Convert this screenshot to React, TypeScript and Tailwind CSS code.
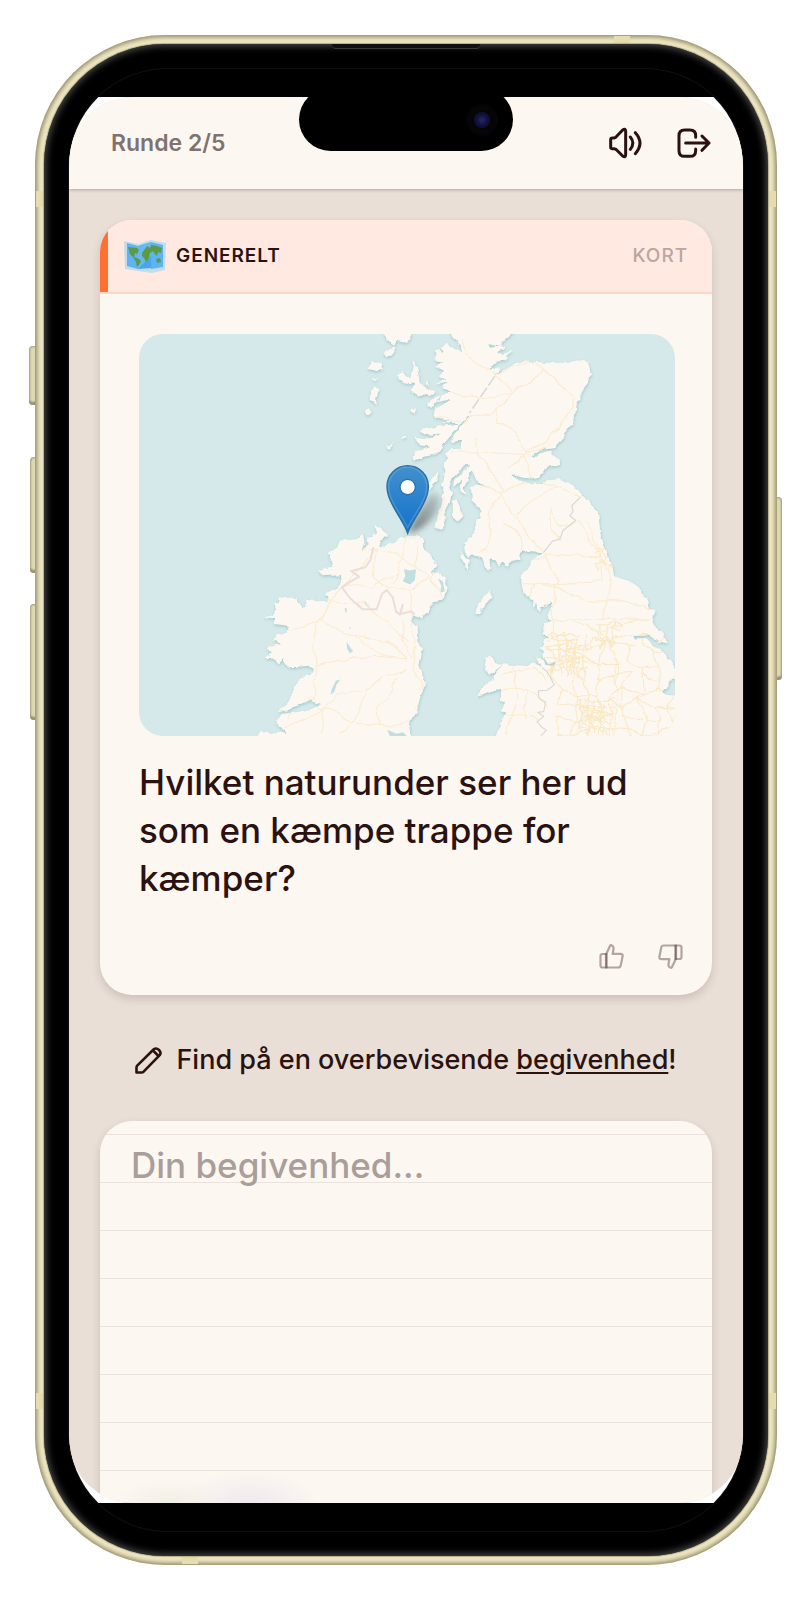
import React from "react";

const LAND = {
  britain:
    "M145 30L160 55L182 76L186 92L165 88L150 78L135 70L122 84L132 96L105 88L106 120L126 124L108 140L132 152L112 168L136 178L106 190L142 186L126 204L152 214L122 228L108 246L150 238L132 254L104 266L100 290L150 300L120 304L180 310L95 322L58 330L72 345L125 340L78 358L45 352L60 375L92 380L45 395L38 422L72 410L110 400L132 370L205 285L212 282L160 345L152 365L190 360L180 385L150 388L135 400L140 416L130 436L136 450L130 480L120 490L130 502L124 540L110 600L105 620L120 628L136 610L130 588L150 540L156 515L146 500L152 480L200 430L210 434L165 480L160 502L186 480L180 510L196 526L190 500L205 480L214 448L224 470L232 488L262 500L226 496L212 500L215 540L235 560L245 590L228 600L225 630L205 650L192 680L195 696L206 716L216 705L245 710L255 735L266 754L270 744L268 712L290 720L296 736L305 724L320 736L336 722L360 715L362 693L395 695L430 698L395 715L385 740L360 770L362 800L385 835L400 840L395 866L408 845L412 872L430 858L455 840L450 870L440 895L455 900L428 910L430 940L445 950L430 960L422 985L430 1012L450 1030L465 1022L462 1036L436 1032L420 1008L410 1010L425 1042L400 1025L370 1035L310 1030L290 1050L275 1075L240 1105L228 1127L250 1122L290 1105L303 1110L302 1136L316 1146L303 1165L320 1178L310 1186L300 1220L278 1260H850V1130L805 1125L783 1110L820 1075L826 1050L815 1030L780 985L755 975L735 952L700 954V946L745 944L775 962L802 968L785 940L765 915L755 890L768 868L745 865L740 840L715 800L690 783L650 770L640 762L635 730L620 705L600 640L596 600L590 572L560 540L530 505L505 490L475 474L450 476L425 492L385 488L355 480L333 461L360 470L385 476L415 470L440 440L476 432L475 420L450 402L450 388L425 395L405 410L390 406L430 385L465 380L490 355L495 335L520 305L525 280L530 245L540 236V220L560 190L572 170L567 140L555 125L540 120L490 128L430 128L400 125L385 118L340 135L300 156L285 165L304 143L270 150L264 148L290 124L310 122L342 88L310 105L290 95L312 88L310 78L270 84L264 73L300 80L310 62L345 30Z",
  ireland:
    "M-440 1260L-415 1233L-385 1238L-360 1235L-335 1240L-370 1205L-355 1180L-280 1170L-235 1152L-265 1146L-262 1135L-300 1150L-335 1168L-367 1174L-335 1145L-315 1100L-300 1070L-265 1060L-256 1042L-270 1035L-335 1040L-350 1015L-362 1028L-380 1010L-405 1012L-390 995L-402 982L-355 970L-378 958L-370 940L-340 936L-335 915L-375 910L-372 895L-412 893L-385 884L-370 870L-380 850L-360 842L-366 830L-310 832L-300 850L-290 862L-280 838L-222 842L-215 848L-225 820L-180 795L-172 764L-230 766L-245 750L-205 738L-200 725L-216 700L-188 680L-180 660L-130 656L-112 640L-106 665L-115 690L-94 672L-98 650L-70 640L-78 612L-35 640L-60 665L-66 680L-20 668L0 650L40 645L72 655V680L100 715L112 735L90 760L115 755L135 775L143 805L125 840L100 845L85 875L64 893L40 885L32 900L50 920L52 965L68 985L58 1030L75 1090L55 1150L50 1175L25 1210L40 1260Z",
  isles:
    "M40 125L50 140L60 165L62 190L76 205L110 213L90 227L70 224L52 230L34 205L46 192L20 195L-2 180L-10 160L10 153L30 175L36 150ZM78 178L84 198L74 194ZM118 225L100 262L80 262L92 240ZM34 262L48 268L42 284L30 278ZM22 340L14 356L0 360ZM-15 366L-32 386L-38 378ZM-50 36L-40 60L-15 80L-8 62L20 72L36 36ZM-38 90L-10 82L-22 100L-38 112L-46 100ZM-80 122L-56 130L-50 145L-72 152L-98 146ZM-80 170L-66 176L-76 184ZM-76 196L-64 210L-74 250L-88 240L-86 210ZM-94 266L-84 272L-94 284L-102 276ZM116 455L108 480L88 508L84 490ZM158 542L170 540L184 568L186 592L174 602L158 588ZM265 810L276 828L256 850L236 878L225 876L236 848ZM255 1008L280 1010L286 1026L305 1034L285 1050L266 1062L250 1036ZM177 688L190 705L206 722L203 736L211 762L196 738L180 714Z",
};

const WATER =
  "M12 745L30 750L48 746L44 780L30 792L8 782L16 766ZM114 774L128 782L134 812L120 816L124 796ZM-160 962L-146 984L-140 990L-150 998L-158 984ZM-178 1076L-190 1092L-196 1112L-208 1122L-204 1104L-192 1080ZM-166 862L-158 864L-162 880ZM-108 838L-92 856L-90 864L-104 852ZM-38 1226L-10 1238L10 1234L20 1246H-30ZM-152 918L-146 922L-150 924Z";

const ROADS =
  "M150 215Q200 235 240 232T330 220L430 152M180 60Q190 110 235 130T290 170L340 215L290 270L285 305L340 330L380 395L480 325L525 235M430 152L520 230M340 205Q390 190 430 152M285 165Q330 140 385 122L430 150M105 290L200 302L290 265M150 395L230 395L370 402L390 480M225 350L232 400L310 510M320 440L375 402L440 370M300 515L390 480L460 495L540 530M230 490L300 520L350 590L400 670L430 695M300 520Q260 580 270 620T240 700M350 580L400 535L470 500M450 570L480 620L540 600M310 600L360 650L365 690M430 700L470 780L460 860L455 940M430 700L600 710L640 765M450 560Q440 620 480 660M530 600L590 690L630 770L620 850L600 930L640 1000L650 1120L640 1240M370 790L460 790L610 780M390 720L440 705M460 790Q540 850 640 840L760 860M460 900L600 895L750 895M520 900L600 940L680 905L740 890M560 600L600 700L605 790M700 950L740 940M305 1060L400 1040L440 1080M300 1110L380 1100L440 1160M340 1040L350 1130L320 1240M380 1100L370 1200M310 1180L420 1190M390 840L400 790L470 800M-205 840L-245 900L-260 960L-250 1040L-260 1140L-230 1165L-235 1240M-335 930L-240 900L-205 840L-120 745L-70 680M-240 900L-140 945L-60 1000L20 1015M-250 1035L-150 1010L20 1010M-230 1160L-180 1120L-90 1105L-50 1070L20 1050M-360 1230L-220 1160L-140 1210L0 1215L40 1190M-140 1210L-100 1110M-60 1215L-70 1160L-20 1110L-10 1070M-140 1210L-185 1240M-220 840L-100 850L20 960M-130 945L-40 960L20 1010M-120 690L-70 680L-10 700L90 770M-70 680L-80 770L-40 800L30 810L90 770M20 650L0 740L-20 790M60 680L40 740M110 740L90 780L130 830M30 810L35 890L45 1000L40 1050L68 1090L50 1170M10 900L5 960L40 1010M-90 800L-40 770L0 755M-340 1190L-270 1130M-190 820L-150 790L-100 800";

const BORDER_IE =
  "M-80 680L-88 718L-104 740L-146 752L-122 768L-150 784L-174 800L-150 832L-112 866L-70 866L-54 820L-40 808L-22 830L-12 872L0 882L8 852L0 880L34 872L44 882";

const BORDER_GB =
  "M428 698L456 662L478 656L488 630L526 600L508 586L518 574L514 556L540 530M425 1040L440 1052L462 1092L440 1108L414 1110L416 1132L436 1144L430 1172L412 1174L430 1186L410 1202L424 1218L438 1228L422 1244";

function noise(i: number, j: number, k: number) {
  const v = Math.sin(i * 127.1 + j * 311.7 + k * 74.7) * 43758.5453;
  return v - Math.floor(v);
}

function mesh(x0: number, y0: number, cols: number, rows: number, step: number, seed: number) {
  const pt = (i: number, j: number) => [
    Math.round(x0 + (i + noise(i, j, seed) * 0.95) * step),
    Math.round(y0 + (j + noise(i, j, seed + 1) * 0.95) * step),
  ];
  let d = "";
  for (let i = 0; i < cols; i++) {
    for (let j = 0; j < rows; j++) {
      const [x, y] = pt(i, j);
      const [rx, ry] = pt(i + 1, j);
      const [bx, by] = pt(i, j + 1);
      if (noise(i, j, seed + 2) > 0.15) d += `M${x} ${y}L${rx} ${ry}`;
      if (noise(i, j, seed + 3) > 0.2) d += `M${x} ${y}L${bx} ${by}`;
    }
  }
  return d;
}

const DENSE = [
  mesh(450, 920, 9, 8, 42, 3),
  mesh(428, 930, 6, 7, 18, 8),
  mesh(470, 960, 5, 5, 18, 21),
  mesh(530, 1130, 5, 5, 20, 5),
  mesh(540, 1150, 4, 4, 15, 31),
  mesh(570, 900, 4, 4, 20, 9),
  mesh(585, 670, 3, 4, 18, 12),
].join("");

function MapView() {
  return (
    <svg
      viewBox="-783 42 1608 1203"
      preserveAspectRatio="xMidYMid slice"
      className="block aspect-[4/3] w-full rounded-3xl bg-[#d5e9ea]"
      role="img"
      aria-label="Kort"
    >
      <defs>
        <filter id="coast" x="-5%" y="-5%" width="110%" height="110%">
          <feTurbulence type="fractalNoise" baseFrequency="0.045" numOctaves="2" seed="4" result="n" />
          <feDisplacementMap in="SourceGraphic" in2="n" scale="16" xChannelSelector="R" yChannelSelector="G" result="d" />
          <feDropShadow in="d" dx="1" dy="4" stdDeviation="5" floodColor="#8fbcc0" floodOpacity="0.75" />
        </filter>
        <filter id="bend" x="-5%" y="-5%" width="110%" height="110%">
          <feTurbulence type="fractalNoise" baseFrequency="0.02" numOctaves="2" seed="9" result="n" />
          <feDisplacementMap in="SourceGraphic" in2="n" scale="26" xChannelSelector="R" yChannelSelector="G" />
        </filter>
        <filter id="soft" x="-50%" y="-50%" width="200%" height="200%">
          <feGaussianBlur stdDeviation="9" />
        </filter>
        <linearGradient id="pin" x1="0" y1="0" x2="0" y2="1">
          <stop offset="0" stopColor="#4291cd" />
          <stop offset="1" stopColor="#1471cb" />
        </linearGradient>
        <linearGradient id="pinShade" x1="0" y1="1" x2="1" y2="0">
          <stop offset="0" stopColor="#444" stopOpacity="0.75" />
          <stop offset="1" stopColor="#555" stopOpacity="0.2" />
        </linearGradient>
        <clipPath id="landClip">
          <path d={LAND.britain} />
          <path d={LAND.ireland} />
        </clipPath>
      </defs>
      <g filter="url(#coast)" fill="#fcf8f1">
        <path d={LAND.britain} />
        <path d={LAND.ireland} />
        <path d={LAND.isles} />
      </g>
      <path d={WATER} fill="#bfdfe1" />
      <path d="M284 168L208 278" stroke="#d9dcd6" strokeWidth="5" strokeDasharray="34 8" fill="none" />
      <g fill="none" strokeLinejoin="round" clipPath="url(#landClip)">
        <g filter="url(#bend)">
          <path d={ROADS} stroke="#faeccf" strokeWidth="3.5" />
          <path d={DENSE} stroke="#fbe7c0" strokeWidth="3" />
        </g>
        <path d={BORDER_IE} stroke="#ecdcdc" strokeWidth="6" />
        <path d={BORDER_GB} stroke="#dcd8d8" strokeWidth="3.5" />
      </g>
      <path d="M23 640Q60 560 92 520Q125 510 118 560Q90 620 23 640Z" fill="url(#pinShade)" filter="url(#soft)" />
      <path
        d="M23 638C8 596 -39 546 -39 498A62 62 0 0 1 85 498C85 546 38 596 23 638Z"
        fill="url(#pin)"
        stroke="#2d6f9f"
        strokeWidth="4"
      />
      <path
        d="M23 622C8 586 -34 542 -34 498A57 57 0 0 1 80 498C80 542 38 586 23 622Z"
        fill="none"
        stroke="#7db7e0"
        strokeOpacity="0.4"
        strokeWidth="4"
      />
      <circle cx="23" cy="500" r="23" fill="#fff" stroke="#2d70a8" strokeWidth="4" />
    </svg>
  );
}

function WorldMapIcon() {
  return (
    <svg viewBox="0 0 42 34" className="h-[34px] w-[42px]" aria-hidden="true">
      <path d="M0 2L14 5L27 1L42 4L41 31L28 34L14 32L1 30Z" fill="#c3dcea" />
      <path d="M3 4L14 7V30L3 27Z" fill="#5db3f3" />
      <path d="M14 7L27 3V29L14 30Z" fill="#4aa5ea" />
      <path d="M27 3L39 6V28L27 30Z" fill="#5db3f3" />
      <path d="M14 7L27 3V17L14 30Z" fill="#7cc4f7" opacity="0.6" />
      <path
        d="M4 8L13 9L15 11L13 15L11 14L10 18L15 20L17 22L15 26L13 28L12 23L9 18L6 15ZM18 14L23 7L26 9L27 6L33 7L38 9L37 14L34 13L33 17L31 15L29 12L26 14L25 19L22 23L20 19L18 17ZM32 20L36 19L37 23L33 24Z"
        fill="#5c9a44"
      />
    </svg>
  );
}

function SpeakerIcon() {
  return (
    <svg viewBox="57 52 102 96" className="h-8 w-[34px]" fill="none" stroke="currentColor" strokeWidth="9" strokeLinecap="round" strokeLinejoin="round" aria-hidden="true">
      <path d="M98 61Q107 55 107 66V135Q107 145 98 139L80 121Q77 117 72 117H67Q62 117 62 112V90Q62 85 67 85H72Q77 84 80 80Z" />
      <path d="M121 82Q136 100 121 119M136 69Q164 100 136 132" />
    </svg>
  );
}

function LeaveIcon() {
  return (
    <svg viewBox="261 52 102 96" className="h-8 w-[34px]" fill="none" stroke="currentColor" strokeWidth="9" strokeLinecap="round" strokeLinejoin="round" aria-hidden="true">
      <path d="M317 83V78Q317 61 300 61H284Q267 61 267 78V123Q267 140 284 140H300Q317 140 317 123V118" />
      <path d="M287 100H356M336 79L357 100L336 122" />
    </svg>
  );
}

function ThumbIcon({ down = false }: { down?: boolean }) {
  return (
    <svg
      viewBox="0 0 25 25"
      className={down ? "size-[25px] rotate-180" : "size-[25px]"}
      fill="none"
      stroke="#2b1210"
      strokeOpacity="0.36"
      strokeWidth="2.2"
      strokeLinejoin="round"
      aria-hidden="true"
    >
      <path d="M7 10H3.500Q1.500 10 1.500 12V21.500Q1.500 23.500 3.500 23.500H7.600V10Z" />
      <path d="M7 23.500V10.500L11 2Q11.500 1 12.500 1.300Q15 2.200 14.500 5L13.700 9.800H21.500Q24 9.800 23.600 12.300L21.800 21.300Q21.400 23.500 19.200 23.500Z" />
    </svg>
  );
}

function PencilIcon() {
  return (
    <svg viewBox="0 0 27 27" className="size-[27px] shrink-0" fill="none" stroke="currentColor" strokeWidth="2.6" strokeLinejoin="round" strokeLinecap="round" aria-hidden="true">
      <path d="M1.500 25.500V20.300Q1.500 19.300 2.200 18.600L18.800 2.300Q21.300 0.400 24 3Q26.600 5.700 24.700 8.200L8.400 24.800Q7.700 25.500 6.700 25.500Z" />
      <path d="M18 3.500L23.500 9" />
    </svg>
  );
}

const BAND = "absolute bg-[#e6dcae]";
const SIDE_BUTTON =
  "absolute bg-[#dfd8b4] shadow-[inset_0_0_2px_1px_#a39d7c,inset_0_-5px_2px_-2px_#8f8a6c]";

export default function App() {
  return (
    <main className="flex min-h-screen bg-white p-[35px] font-['Inter',sans-serif] text-[#2b1210]">
      <div className="relative flex min-w-0 flex-1">
        <span className={`${SIDE_BUTTON} top-[311px] -left-[6px] h-[59px] w-2 rounded-l-sm`} />
        <span className={`${SIDE_BUTTON} top-[422px] -left-[5px] h-[116px] w-2 rounded-l-sm`} />
        <span className={`${SIDE_BUTTON} top-[569px] -left-[5px] h-[116px] w-2 rounded-l-sm`} />
        <span className={`${SIDE_BUTTON} top-[462px] -right-[5px] h-[183px] w-2 rounded-r-sm`} />

        <div className="relative flex min-w-0 flex-1 rounded-[130px] bg-[#eee6c2] p-[9px] shadow-[inset_0_0_4px_2px_#8f8967]">
          <span className={`${BAND} top-px right-[147px] h-2 w-4`} />
          <span className={`${BAND} bottom-px left-[147px] h-2 w-4`} />
          <span className={`${BAND} top-[156px] left-px h-4 w-2`} />
          <span className={`${BAND} top-[156px] right-px h-4 w-2`} />
          <span className={`${BAND} bottom-[156px] left-px h-4 w-2`} />
          <span className={`${BAND} right-px bottom-[156px] h-4 w-2`} />

          <div className="relative flex min-w-0 flex-1 rounded-[121px] bg-black p-[25px] shadow-[inset_0_0_7px_2px_#4a4a4a,0_0_1px_1px_#b5ae8a]">
            <span className="absolute top-0 left-1/2 h-[5px] w-[148px] -translate-x-1/2 rounded-b-sm border-b border-[#3a3a3a] bg-[#111]" />

            <div className="flex min-w-0 flex-1 flex-col overflow-hidden rounded-[98px] bg-black py-7 shadow-[0_0_0_1px_#101010]">
              <div className="flex min-w-0 flex-1 flex-col bg-white">
                <div className="flex min-w-0 flex-1 flex-col overflow-hidden rounded-[64px] bg-[#e9dfd7]">
                  <header className="relative flex h-[92px] items-center justify-between bg-[#fdf7f1] pr-8 pl-[42px] shadow-[0_1px_3px_rgba(60,30,20,0.3)]">
                    <p className="text-[23px] font-semibold text-[#7f7370]">Runde 2/5</p>
                    <div className="flex gap-[34px]">
                      <button type="button" aria-label="Lyd">
                        <SpeakerIcon />
                      </button>
                      <button type="button" aria-label="Forlad spil">
                        <LeaveIcon />
                      </button>
                    </div>
                  </header>

                  <section className="flex flex-1 flex-col px-[31px] pt-[31px]">
                    <article className="overflow-hidden rounded-[32px] bg-[#fdf7f1] shadow-[0_4px_8px_rgba(60,30,20,0.16)]">
                      <div className="border-b-2 border-[#ffd5c8]">
                        <div className="flex h-[72px] items-center justify-between border-l-[8px] border-[#ff7031] bg-[#ffe9e1] pr-6 pl-4">
                          <div className="flex items-center gap-[10px]">
                            <WorldMapIcon />
                            <h2 className="text-[19px] font-semibold tracking-wider">GENERELT</h2>
                          </div>
                          <span className="text-[19px] font-medium tracking-wider text-[#b9a6a0]">KORT</span>
                        </div>
                      </div>

                      <div className="pt-10 pr-[37px] pl-[39px]">
                        <MapView />
                        <p className="pt-[22px] text-[35px] leading-[48px] font-medium">
                          Hvilket naturunder ser her ud som en kæmpe trappe for kæmper?
                        </p>
                      </div>

                      <div className="flex justify-end gap-[34px] px-[29px] pt-[42px] pb-[26px]">
                        <button type="button" aria-label="Synes godt om">
                          <ThumbIcon />
                        </button>
                        <button type="button" aria-label="Synes ikke om">
                          <ThumbIcon down />
                        </button>
                      </div>
                    </article>

                    <label htmlFor="answer" className="flex items-center justify-center gap-[14px] pt-[49px] pb-[45px] text-[27px] leading-8 font-medium">
                      <PencilIcon />
                      <span>
                        Find på en overbevisende <span className="underline decoration-2 underline-offset-3">begivenhed</span>!
                      </span>
                    </label>

                    <textarea
                      id="answer"
                      placeholder="Din begivenhed..."
                      className="block min-h-[382px] w-full flex-1 resize-none rounded-t-[32px] bg-[#fdf7f1] bg-[radial-gradient(60px_24px_at_70px_100%,#f1efe5,transparent),radial-gradient(70px_32px_at_150px_100%,#efe8ee,transparent),repeating-linear-gradient(to_bottom,transparent_0,transparent_13px,#e9e2dd_13px,#e9e2dd_14px,transparent_14px,transparent_48px)] px-[31px] pt-5 text-[35px] leading-[48px] font-medium shadow-[0_4px_8px_rgba(60,30,20,0.16)] outline-none placeholder:text-[#a99e9a] placeholder:opacity-100"
                    />
                  </section>
                </div>
              </div>
            </div>

            <div className="absolute top-11 left-1/2 flex h-[63px] w-[214px] -translate-x-1/2 items-center justify-end rounded-full bg-black pr-[15px]">
              <span className="flex size-8 items-center justify-center rounded-full bg-[#050507]">
                <span className="size-4 rounded-full bg-[radial-gradient(circle,#232a60_0,#11103d_50%,#0a0a1c_100%)]" />
              </span>
            </div>
          </div>
        </div>
      </div>
    </main>
  );
}
